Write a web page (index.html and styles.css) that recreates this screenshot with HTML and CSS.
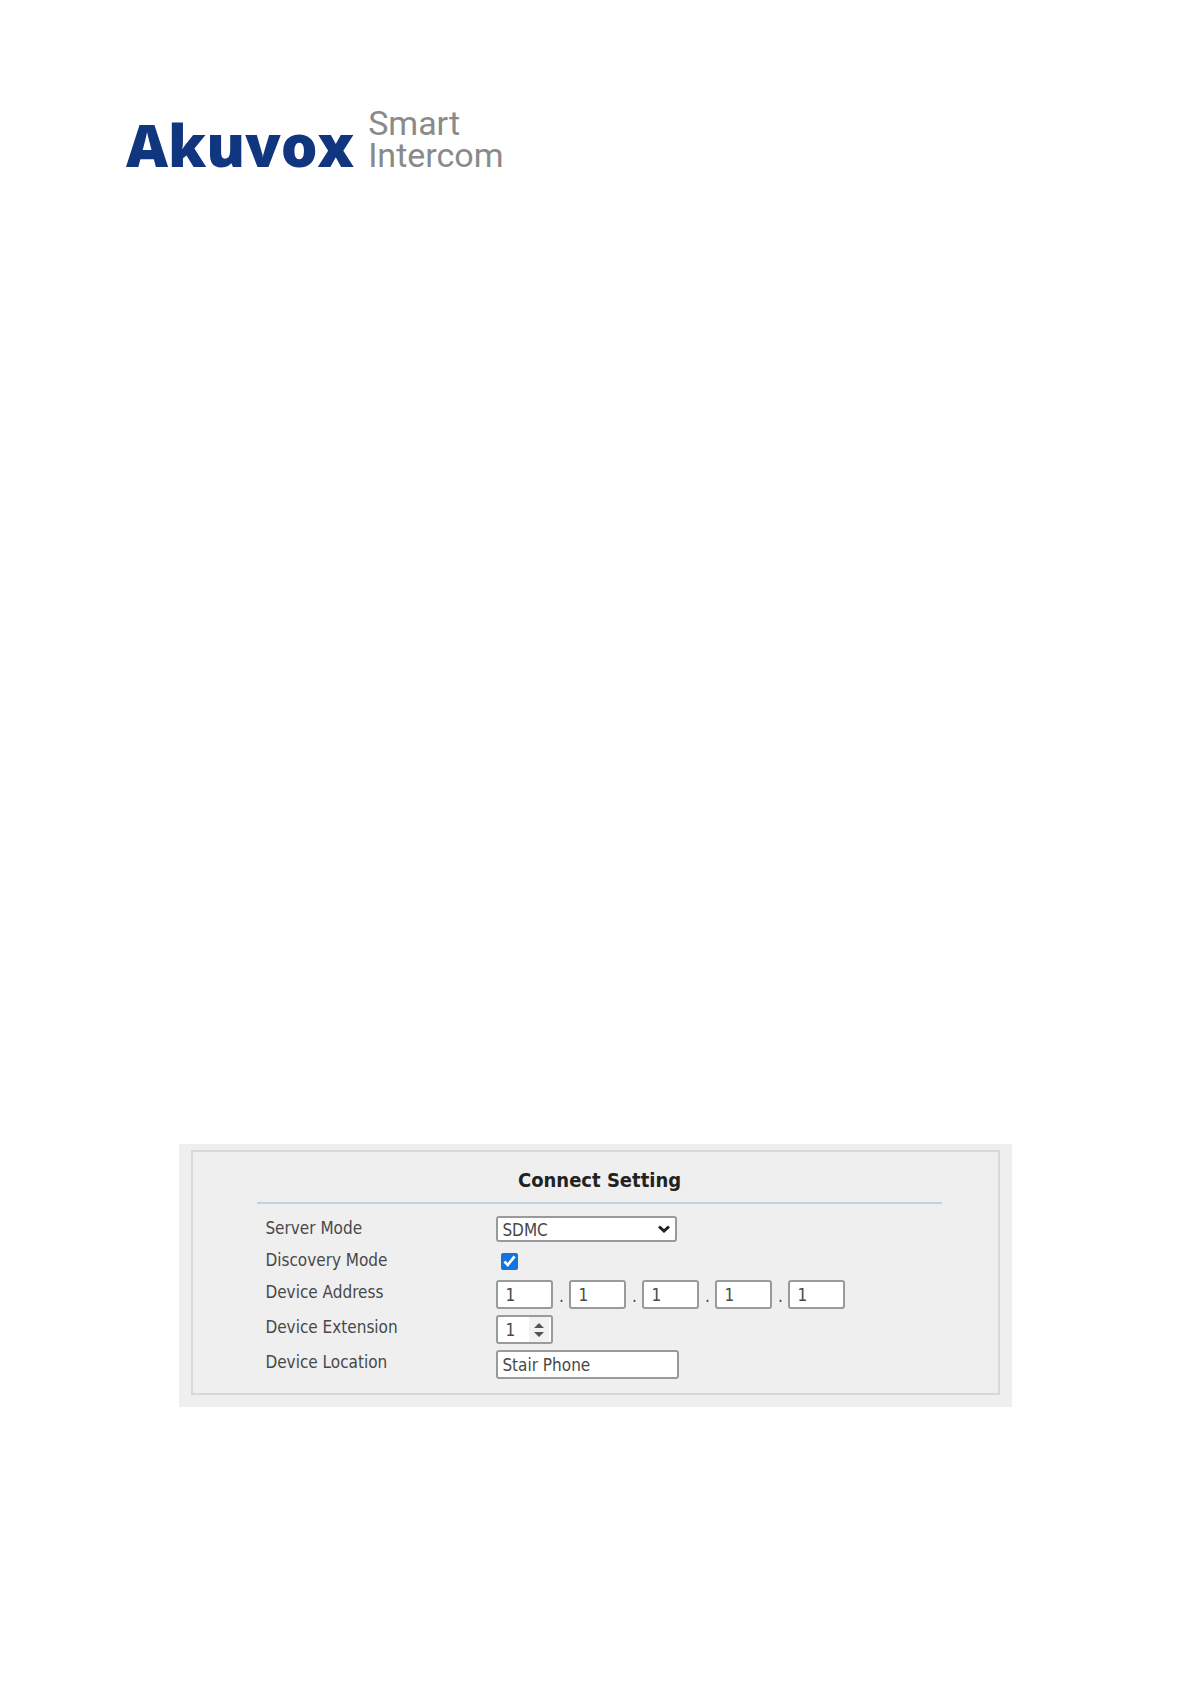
FILE: index.html
```html
<!DOCTYPE html>
<html lang="en">
<head>
<meta charset="utf-8">
<title>Akuvox Smart Intercom</title>
<meta name="viewport" content="width=device-width, initial-scale=1">
<link rel="stylesheet" href="styles.css">
</head>
<body>
<header class="brand">
  <span class="brand-name">Akuvox</span>
  <span class="brand-tag"><span>Smart</span><span>Intercom</span></span>
</header>
<main class="panel">
  <form class="card">
    <h1 class="title">Connect Setting</h1>
    <div class="rows">
      <div class="row">
        <label class="label" for="mode">Server Mode</label>
        <div class="select-wrap">
          <select class="field select" id="mode"><option>SDMC</option></select>
          <svg class="chevron" viewBox="0 0 12 8" aria-hidden="true"><path d="M1 1.5 L6 6 L11 1.5"/></svg>
        </div>
      </div>
      <div class="row">
        <label class="label" for="discovery">Discovery Mode</label>
        <input class="check" type="checkbox" id="discovery" checked>
      </div>
      <div class="row">
        <label class="label" for="addr1">Device Address</label>
        <div class="address">
          <input class="field short" id="addr1" value="1"><span class="dot">.</span>
          <input class="field short" aria-label="Device Address 2" value="1"><span class="dot">.</span>
          <input class="field short" aria-label="Device Address 3" value="1"><span class="dot">.</span>
          <input class="field short" aria-label="Device Address 4" value="1"><span class="dot">.</span>
          <input class="field short" aria-label="Device Address 5" value="1">
        </div>
      </div>
      <div class="row">
        <label class="label" for="ext">Device Extension</label>
        <div class="spin">
          <input class="field short number" type="number" id="ext" value="1">
          <svg class="arrows" viewBox="0 0 20 25" aria-hidden="true"><path d="M5 11 L10 6 L15 11Z M5 15 L10 20 L15 15Z"/></svg>
        </div>
      </div>
      <div class="row">
        <label class="label" for="loc">Device Location</label>
        <input class="field long" id="loc" value="Stair Phone">
      </div>
    </div>
  </form>
</main>
</body>
</html>
```
FILE: styles.css
```css
* { box-sizing: border-box; }

body {
  margin: 0;
  background: #fff;
  color: #484848;
  font: 17px/24px "DejaVu Sans Condensed", "DejaVu Sans", sans-serif;
}

.brand {
  display: flex;
  align-items: last baseline;
  gap: 14px;
  padding: 107px 126px 0;
}

.brand-name {
  color: #10367f;
  font: 800 58px/68px "Open Sans", sans-serif;
}

.brand-tag {
  display: flex;
  flex-direction: column;
  color: #8a8a8a;
  font: 400 34px/32px Roboto, sans-serif;
}

.panel {
  margin: 965px 15% 0;
  padding: 6px 12px 12px;
  background: #efefef;
}

.card {
  padding: 16px 7% 14px 8%;
  border: 2px solid #d8d8d8;
}

.title {
  margin: 0 0 12px;
  padding-bottom: 10px;
  border-bottom: 2px solid #c4d0da;
  color: #222;
  font-size: 20px;
  line-height: 24px;
  text-align: center;
}

.rows {
  display: flex;
  flex-direction: column;
  gap: 6px;
  padding-left: 8px;
}

.row {
  display: grid;
  grid-template-columns: 231px 1fr;
  justify-items: start;
  min-height: 26px;
}

.field {
  height: 29px;
  padding: 0 4px;
  border: 2px solid #9a9a9a;
  border-radius: 3px;
  background: #fff;
  color: #484848;
  font: inherit;
}

.select-wrap,
.spin {
  position: relative;
}

.select {
  width: 181px;
  height: 26px;
  appearance: none;
}

.chevron {
  position: absolute;
  top: 9px;
  right: 7px;
  width: 12px;
  height: 8px;
  fill: none;
  stroke: #222;
  stroke-width: 3;
}

.check {
  align-self: center;
  width: 17px;
  height: 17px;
  margin: 0 0 0 5px;
  accent-color: #1273de;
}

.address {
  display: flex;
  height: 29px;
}

.short {
  width: 57px;
  padding: 0 7px;
}

.dot {
  width: 16px;
  line-height: 32px;
  text-align: center;
}

.number {
  display: block;
  appearance: textfield;
}

.arrows {
  position: absolute;
  top: 2px;
  right: 4px;
  width: 20px;
  height: 25px;
  background: #f2f2f2;
  fill: #555;
}

.long {
  width: 183px;
}
```
